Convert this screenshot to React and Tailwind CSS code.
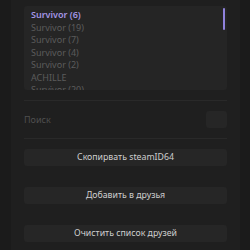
import React from "react";

const PLAYERS = [
  "Survivor (6)",
  "Survivor (19)",
  "Survivor (7)",
  "Survivor (4)",
  "Survivor (2)",
  "ACHILLE",
  "Survivor (20)",
];

const ACTIONS = ["Скопирвать steamID64", "Добавить в друзья", "Очистить список друзей"];

export default function App() {
  return (
    <div
      className="flex h-[250px] w-[250px] overflow-hidden bg-[#1b1b1b]"
      style={{ fontFamily: '"Noto Sans", "Open Sans", sans-serif' }}
    >
      <div className="ml-[11px] flex h-full w-[229px] flex-col bg-[#1f1f1f] px-[13px]">
        <div className="relative mt-[6px] h-[84px] overflow-hidden rounded-[3px] bg-[#252525] pl-[7px] pt-[3px]">
          {PLAYERS.map((name, i) => (
            <div
              key={name}
              className={
                i === 0
                  ? "h-[12.5px] text-[9px] leading-[12.5px] font-semibold text-[#a496e6]"
                  : "h-[12.5px] text-[9px] leading-[12.5px] text-[#5c5c5c]"
              }
            >
              {name}
            </div>
          ))}
          <div className="absolute right-[2px] top-[2px] h-[22px] w-[2px] rounded-full bg-[#8f82dc]" />
        </div>

        <div className="mt-[10px] h-px bg-[#292929]" />

        <div className="mt-[10px] flex items-center justify-between">
          <span className="text-[9px] text-[#4f4f4f]">Поиск</span>
          <div className="h-[17px] w-[21px] rounded-[3px] bg-[#262626]" />
        </div>

        <div className="mt-[10px] h-px bg-[#292929]" />

        <div className="mt-[10px] flex flex-col gap-[21px]">
          {ACTIONS.map((label) => (
            <button
              key={label}
              type="button"
              className="flex h-[17px] items-center justify-center rounded-[3px] bg-[#262626] text-[8.75px] text-[#cfcfcf]"
            >
              {label}
            </button>
          ))}
        </div>
      </div>
    </div>
  );
}
